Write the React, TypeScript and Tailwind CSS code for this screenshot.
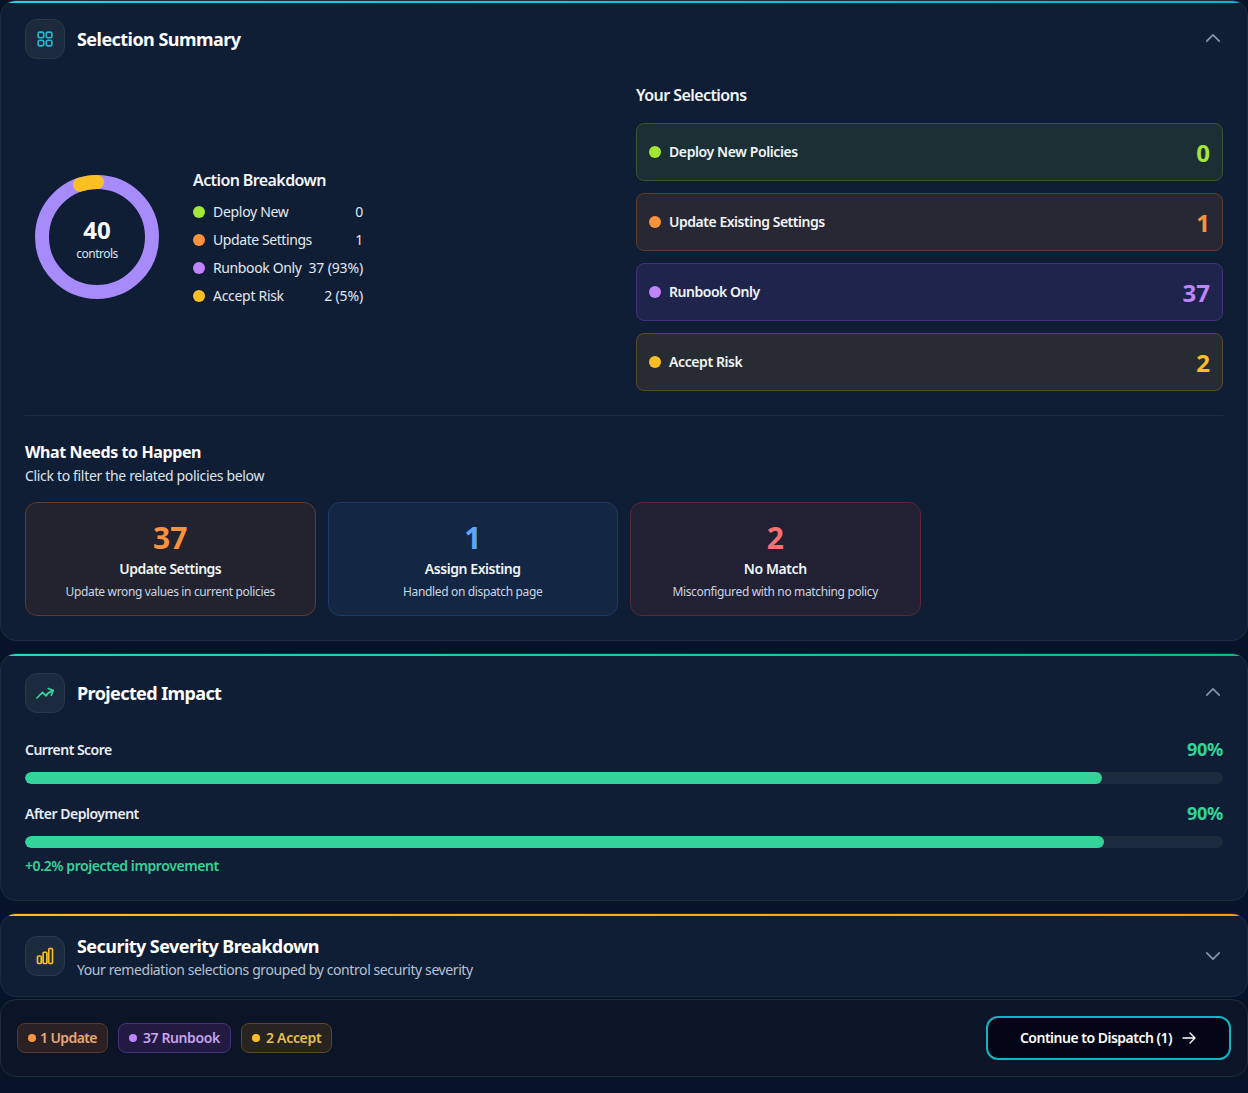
import React from "react";
import { HiOutlineSquares2X2, HiOutlineArrowTrendingUp, HiOutlineChartBar, HiOutlineChevronUp, HiOutlineChevronDown, HiOutlineArrowRight } from "react-icons/hi2";

const legend = [
  { c: "bg-[#a3e635]", l: "Deploy New", v: "0", t: "tracking-[-0.3px]" },
  { c: "bg-[#fb923c]", l: "Update Settings", v: "1", t: "tracking-[-0.42px]" },
  { c: "bg-[#c084fc]", l: "Runbook Only", v: "37 (93%)", t: "tracking-[-0.38px]" },
  { c: "bg-[#fbbf24]", l: "Accept Risk", v: "2 (5%)", t: "tracking-[-0.3px]" },
];

const selections = [
  { box: "bg-[#1c2f35] border-[#37562e]", dot: "bg-[#a3e635]", num: "text-[#a3e635]", l: "Deploy New Policies", v: "0", t: "tracking-[-0.4px]" },
  { box: "bg-[#282834] border-[#5e3b2c]", dot: "bg-[#fb923c]", num: "text-[#fb923c]", l: "Update Existing Settings", v: "1", t: "tracking-[-0.47px]" },
  { box: "bg-[#1e244c] border-[#46307e]", dot: "bg-[#c084fc]", num: "text-[#c084fc]", l: "Runbook Only", v: "37", t: "tracking-[-0.47px]" },
  { box: "bg-[#272c32] border-[#594a2a]", dot: "bg-[#fbbf24]", num: "text-[#fbbf24]", l: "Accept Risk", v: "2", t: "tracking-[-0.4px]" },
];

const needs = [
  { box: "bg-[#22232f] border-[#5e3b2c]", num: "text-[#fb923c]", v: "37", t: "Update Settings", d: "Update wrong values in current policies", tt: "tracking-[-0.5px]" },
  { box: "bg-[#132744] border-[#1e3a68]", num: "text-[#60a5fa]", v: "1", t: "Assign Existing", d: "Handled on dispatch page", tt: "tracking-[-0.43px]" },
  { box: "bg-[#222033] border-[#5a2a36]", num: "text-[#f87171]", v: "2", t: "No Match", d: "Misconfigured with no matching policy", tt: "tracking-[-0.4px]" },
];

const pills = [
  { box: "w-[91px] bg-[#2b2024] border-[#5a3828] gap-[4px]", dot: "bg-[#fb923c]", text: "text-[#e8a878]", l: "1 Update", t: "tracking-[-0.6px]" },
  { box: "w-[113px] bg-[#221a40] border-[#46307e] gap-[6px]", dot: "bg-[#c084fc]", text: "text-[#c8a4ec]", l: "37 Runbook", t: "tracking-[-0.4px]" },
  { box: "w-[91px] bg-[#27231f] border-[#594a24] gap-[6px]", dot: "bg-[#fbbf24]", text: "text-[#e8c050]", l: "2 Accept", t: "tracking-[-0.3px]" },
];

function HeaderIcon({ children }: { children: React.ReactNode }) {
  return (
    <div className="w-10 h-10 shrink-0 rounded-xl bg-[#1b2a3d] border border-[#2a3a4c] flex items-center justify-center">
      {children}
    </div>
  );
}

function Bar({ label, width, track }: { label: string; width: string; track: string }) {
  return (
    <div>
      <div className="flex items-center justify-between h-6">
        <span className={`text-[14px] font-semibold text-[#e8eef5] ${track}`}>{label}</span>
        <span className="text-[18px] font-bold text-[#34d399]">90%</span>
      </div>
      <div className="mt-[11px] h-3 rounded-full bg-[#1c2b3d] overflow-hidden">
        <div className={`h-full rounded-full bg-[#34d399] ${width}`} />
      </div>
    </div>
  );
}

export default function App() {
  return (
    <div className="min-h-[1093px] bg-[#071428] font-['Noto_Sans',sans-serif] text-white tracking-[-0.3px]">
      <section className="h-[641px] rounded-2xl border border-[#1f2c3e] bg-[#0f1e35] overflow-hidden">
        <div className="h-[2px] bg-linear-to-r from-[#22d3ee] to-[#06b6d4]" />
        <div className="flex items-center justify-between px-6 pt-[16px] h-[56px]">
          <div className="flex items-center gap-3">
            <HeaderIcon><HiOutlineSquares2X2 strokeWidth={2} className="w-5 h-5 text-[#22b8d4]" /></HeaderIcon>
            <h2 className="text-[18px] font-bold tracking-[-0.55px]">Selection Summary</h2>
          </div>
          <HiOutlineChevronUp strokeWidth={2} className="w-5 h-5 mb-[2px] text-[#8a94a6]" />
        </div>
        <div className="grid grid-cols-2 gap-6 px-6 pt-[22px]">
          <div className="flex items-center gap-[26px]">
            <div className="relative w-[140px] h-[140px] shrink-0 ml-[2px] mt-[2px]">
              <svg viewBox="0 0 140 140" className="w-full h-full">
                <circle cx="70" cy="70" r="55" fill="none" stroke="#a78bfa" strokeWidth="14" />
                <circle cx="70" cy="70" r="55" fill="none" stroke="#fbbf24" strokeWidth="14" strokeLinecap="round" strokeDasharray="17.3 328.3" transform="rotate(-108 70 70)" />
              </svg>
              <div className="absolute inset-0 pt-[2px] flex flex-col items-center justify-center">
                <span className="text-[24px] font-bold leading-8 tracking-normal">40</span>
                <span className="text-[12px] text-[#dbe4ee] leading-4 tracking-[-0.5px]">controls</span>
              </div>
            </div>
            <div className="w-[170px] mt-[5px]">
              <div className="text-[16px] font-semibold text-[#f1f5f9] mb-[5px] leading-6 tracking-[-0.6px]">Action Breakdown</div>
              {legend.map((r) => (
                <div key={r.l} className="flex items-center justify-between h-7 text-[14px] text-[#e2e8f0]">
                  <span className={`flex items-center gap-2 ${r.t}`}>
                    <span className={`w-3 h-3 mt-[1px] rounded-full ${r.c}`} />
                    {r.l}
                  </span>
                  <span className="tracking-[-0.15px]">{r.v}</span>
                </div>
              ))}
            </div>
          </div>
          <div>
            <h3 className="text-[16px] font-semibold text-[#f1f5f9] leading-6 mt-[2px] tracking-[-0.57px]">Your Selections</h3>
            <div className="mt-4 flex flex-col gap-3">
              {selections.map((s) => (
                <div key={s.l} className={`h-[58px] rounded-lg border px-3 flex items-center justify-between ${s.box}`}>
                  <span className="flex items-center gap-2 text-[14px] font-semibold text-[#f1f5f9]">
                    <span className={`w-3 h-3 rounded-full ${s.dot}`} />
                    <span className={`mb-[2px] ${s.t}`}>{s.l}</span>
                  </span>
                  <span className={`text-[24px] font-bold tracking-normal pt-[2px] ${s.num}`}>{s.v}</span>
                </div>
              ))}
            </div>
          </div>
        </div>
        <div className="mx-6 mt-6 border-t border-[#1f2c3e] pt-[24px]">
          <h3 className="text-[16px] font-bold leading-6 tracking-[-0.4px]">What Needs to Happen</h3>
          <p className="text-[14px] text-[#dbe4ee] leading-6 tracking-[-0.33px]">Click to filter the related policies below</p>
          <div className="grid grid-cols-4 gap-3 mt-[14px]">
            {needs.map((n) => (
              <div key={n.t} className={`h-[114px] rounded-xl border flex flex-col items-center pt-[17px] ${n.box}`}>
                <span className={`text-[30px] font-bold leading-9 tracking-normal ${n.num}`}>{n.v}</span>
                <span className={`text-[14px] font-semibold text-[#f1f5f9] leading-6 mt-[1px] ${n.tt}`}>{n.t}</span>
                <span className="text-[12px] text-[#cbd5e1] leading-5 mt-[1px] tracking-[-0.35px]">{n.d}</span>
              </div>
            ))}
          </div>
        </div>
      </section>

      <section className="mt-3 h-[248px] rounded-2xl border border-[#1f2c3e] bg-[#0f1e35] overflow-hidden">
        <div className="h-[2px] bg-linear-to-r from-[#2dd4bf] to-[#10b981]" />
        <div className="flex items-center justify-between px-6 pt-[17px] h-[57px]">
          <div className="flex items-center gap-3">
            <HeaderIcon><HiOutlineArrowTrendingUp strokeWidth={2} className="w-5 h-5 text-[#34d399]" /></HeaderIcon>
            <h2 className="text-[18px] font-bold tracking-[-0.6px]">Projected Impact</h2>
          </div>
          <HiOutlineChevronUp strokeWidth={2} className="w-5 h-5 mb-[2px] text-[#8a94a6]" />
        </div>
        <div className="px-6 mt-[24px] flex flex-col gap-[17px]">
          <Bar label="Current Score" width="w-[89.9%]" track="tracking-[-0.53px]" />
          <Bar label="After Deployment" width="w-[90.07%]" track="tracking-[-0.49px]" />
        </div>
        <p className="px-6 mt-[6px] text-[14px] font-semibold text-[#34d399] leading-6 tracking-[-0.41px]">+0.2% projected improvement</p>
      </section>

      <section className="mt-3 h-[84px] rounded-2xl border border-[#1f2c3e] bg-[#0f1e35] overflow-hidden">
        <div className="h-[2px] bg-linear-to-r from-[#fbbf24] to-[#f59e0b]" />
        <div className="flex items-center justify-between px-6 h-[80px]">
          <div className="flex items-center gap-3">
            <HeaderIcon><HiOutlineChartBar strokeWidth={2} className="w-5 h-5 text-[#fbbf24]" /></HeaderIcon>
            <div className="pt-[2px]">
              <h2 className="text-[18px] font-bold leading-6 mb-[2px] tracking-[-0.56px]">Security Severity Breakdown</h2>
              <p className="text-[14px] text-[#b4c2d4] leading-5 tracking-[-0.41px]">Your remediation selections grouped by control security severity</p>
            </div>
          </div>
          <HiOutlineChevronDown strokeWidth={2} className="w-5 h-5 text-[#8a94a6]" />
        </div>
      </section>

      <footer className="mt-[2px] h-[78px] rounded-2xl border border-[#1f2c3e] bg-[#0c1528] flex items-center justify-between px-4">
        <div className="flex items-center gap-[10px]">
          {pills.map((p) => (
            <span key={p.l} className={`h-[30px] pl-[10px] rounded-lg border flex items-center text-[14px] font-semibold ${p.box} ${p.text} ${p.t}`}>
              <span className={`w-2 h-2 rounded-full ${p.dot}`} />
              <span className="mb-[1px]">{p.l}</span>
            </span>
          ))}
        </div>
        <button className="w-[245px] h-11 rounded-xl border-2 border-[#0fb5c4] bg-[#020617] flex items-center justify-center gap-[9px] text-[14px] font-semibold text-white tracking-[-0.5px]">
          <span className="mb-[1px]">Continue to Dispatch (1)</span>
          <HiOutlineArrowRight strokeWidth={2} className="w-4 h-4" />
        </button>
      </footer>
    </div>
  );
}
